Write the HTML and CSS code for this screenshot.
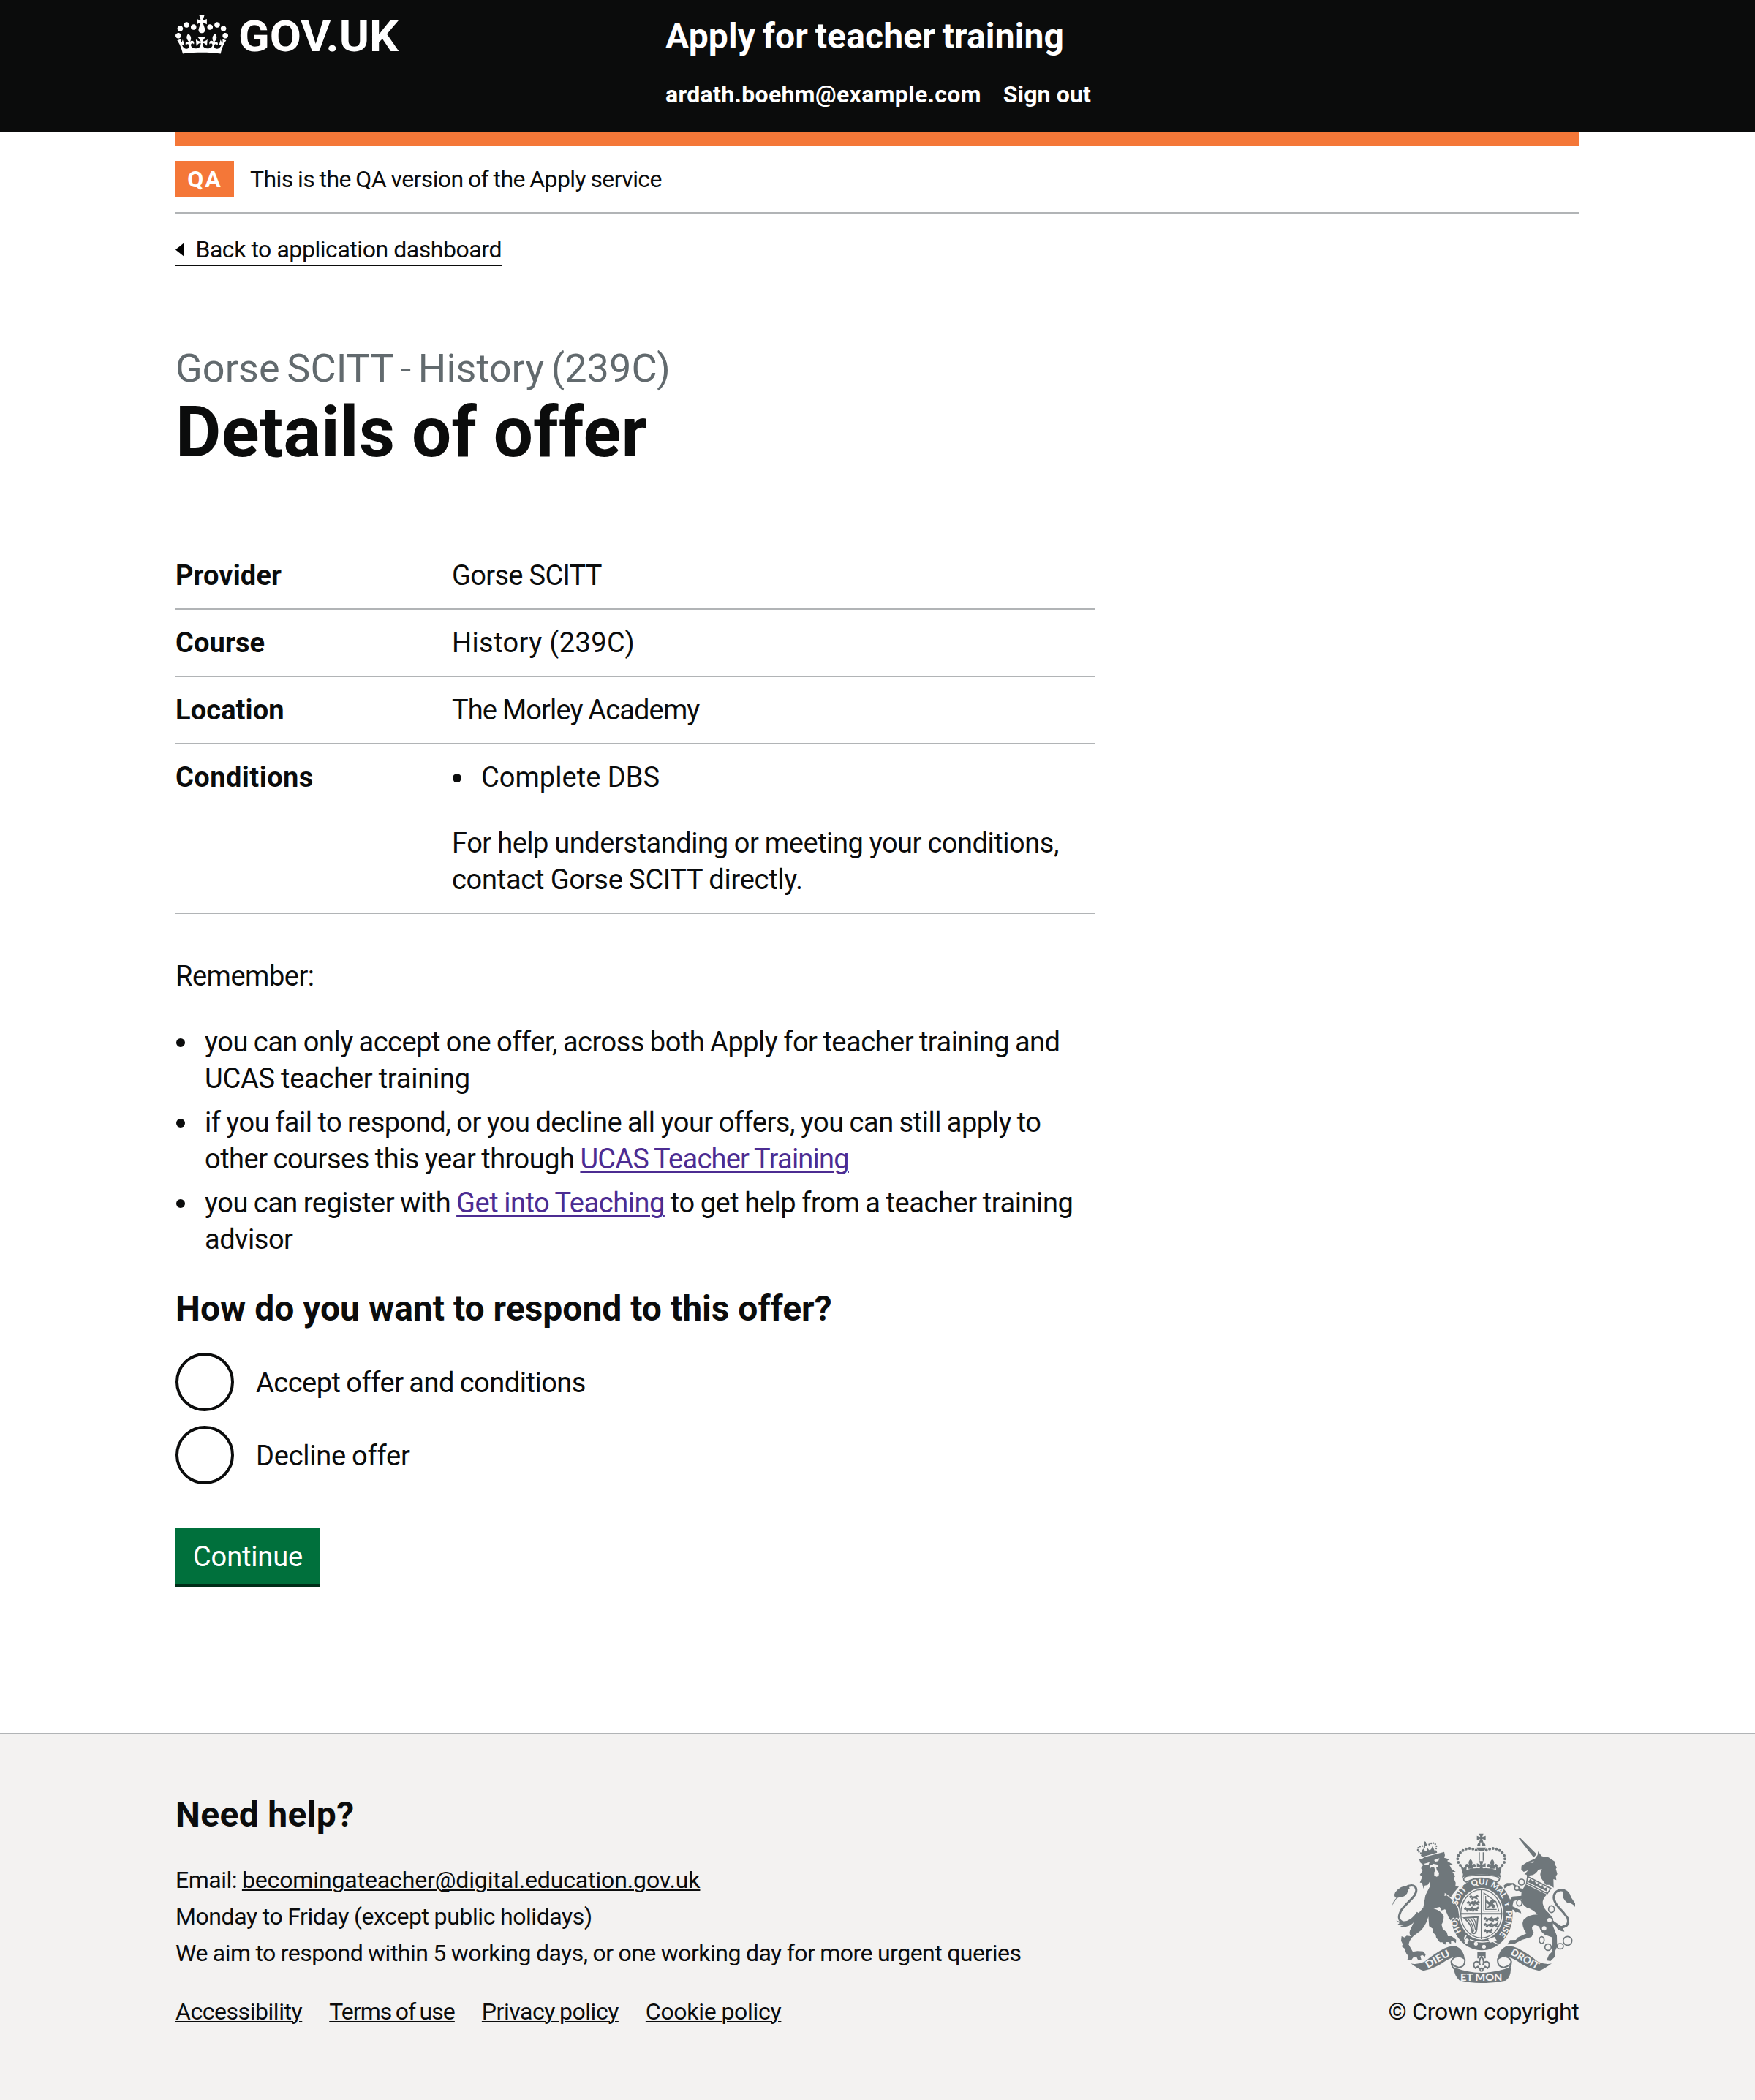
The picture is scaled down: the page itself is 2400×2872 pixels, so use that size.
FILE: index.html
```html
<!DOCTYPE html>
<html lang="en">
<head>
<meta charset="utf-8">
<title>Details of offer - Apply for teacher training - GOV.UK</title>
<link rel="stylesheet" href="styles.css">
</head>
<body>
<header class="header">
  <div class="container header-row">
    <a class="logo" href="#" aria-label="GOV.UK">
      <svg class="crown" viewBox="0 0 132 97" aria-hidden="true"><path fill="currentColor" d="M25 30.2c3.5 1.5 7.7-.2 9.1-3.7 1.5-3.6-.2-7.8-3.9-9.2-3.6-1.4-7.6.3-9.1 3.9-1.4 3.5.3 7.5 3.9 9zM9 39.5c3.6 1.5 7.8-.2 9.2-3.7 1.5-3.6-.2-7.8-3.9-9.1-3.6-1.5-7.6.2-9.1 3.8-1.4 3.5.3 7.5 3.8 9zM4.4 57.2c3.5 1.5 7.7-.2 9.1-3.8 1.5-3.6-.2-7.7-3.9-9.1-3.5-1.5-7.6.3-9.1 3.8-1.4 3.5.3 7.6 3.9 9.1zm38.3-21.4c3.5 1.5 7.7-.2 9.1-3.8 1.5-3.6-.2-7.7-3.9-9.1-3.6-1.5-7.6.3-9.1 3.8-1.3 3.6.4 7.7 3.9 9.1zm64.4-5.6c-3.6 1.5-7.8-.2-9.1-3.7-1.5-3.6.2-7.8 3.8-9.2 3.6-1.4 7.7.3 9.2 3.9 1.3 3.5-.4 7.5-3.9 9zm15.9 9.3c-3.6 1.5-7.7-.2-9.1-3.7-1.5-3.6.2-7.8 3.7-9.1 3.6-1.5 7.7.2 9.2 3.8 1.5 3.5-.3 7.5-3.8 9zm4.7 17.7c-3.6 1.5-7.8-.2-9.2-3.8-1.5-3.6.2-7.7 3.9-9.1 3.6-1.5 7.7.3 9.2 3.8 1.3 3.5-.4 7.6-3.9 9.1zM89.3 35.8c-3.6 1.5-7.8-.2-9.2-3.8-1.4-3.6.2-7.7 3.9-9.1 3.6-1.5 7.7.3 9.2 3.8 1.4 3.6-.3 7.7-3.9 9.1zM69.7 17.7l8.9 4.7V9.3l-8.9 2.8c-.2-.3-.5-.6-.9-.9L72.4 0H59.6l3.5 11.2c-.3.3-.6.5-.9.9l-8.8-2.8v13.1l8.8-4.7c.3.3.6.7.9.9l-5 15.4v.1c-.2.8-.4 1.6-.4 2.4 0 4.1 3.1 7.5 7 8.1h.2c.3 0 .7.1 1 .1.4 0 .7 0 1-.1h.2c4-.6 7.1-4.1 7.1-8.1 0-.8-.1-1.7-.4-2.4V34l-5.1-15.4c.4-.2.7-.6 1-.9zM66 92.8c16.9 0 32.8 1.1 47.1 3.2 4-16.9 8.9-26.7 14-33.5l-9.6-3.4c1 4.9 1.1 7.2 0 10.2-1.5-1.4-3-4.3-4.2-8.7L108.6 76c2.8-2 5-3.2 7.5-3.3-4.4 9.4-10 11.9-13.6 11.2-4.3-.8-6.3-4.6-5.6-7.9 1-4.7 5.7-5.9 8-.5 4.3-8.7-3-11.4-7.6-8.8 7.1-7.2 7.9-13.5 2.1-21.1-8 6.1-8.1 12.3-4.5 20.8-4.7-5.4-12.1-2.5-9.5 6.2 3.4-5.2 7.9-2 7.2 3.1-.6 4.3-6.4 7.8-13.5 7.2-10.3-.9-10.9-8-11.2-13.8 2.5-.5 7.1 1.8 11 7.3L80.2 60c-4.1 4.4-8 5.3-12.3 5.4 1.4-4.4 8-11.6 8-11.6H55.5s6.4 7.2 7.9 11.6c-4.2-.1-8-1-12.3-5.4l1.4 16.4c3.9-5.5 8.5-7.7 10.9-7.3-.3 5.8-.9 12.8-11.1 13.8-7.2.6-12.9-2.9-13.5-7.2-.7-5 3.8-8.3 7.1-3.1 2.7-8.7-4.6-11.6-9.4-6.2 3.7-8.5 3.6-14.7-4.6-20.8-5.8 7.6-5 13.9 2.2 21.1-4.7-2.6-11.9.1-7.7 8.8 2.3-5.5 7.1-4.2 8.1.5.7 3.3-1.3 7.1-5.7 7.9-3.5.7-9-1.8-13.5-11.2 2.5.1 4.7 1.3 7.5 3.3l-4.7-15.4c-1.2 4.4-2.7 7.2-4.3 8.7-1.1-3-.9-5.3 0-10.2l-9.5 3.4c5 6.9 9.9 16.7 14 33.5 14.8-2.1 30.8-3.2 47.7-3.2z"/></svg>
      <svg class="wordmark" viewBox="0 0 230 80" aria-hidden="true"><text x="0" y="59" textLength="219" lengthAdjust="spacingAndGlyphs">GOV.UK</text></svg>
    </a>
    <div class="header-content">
      <a class="service-name" href="#">Apply for teacher training</a>
      <nav class="account"><a class="account-email" href="#">ardath.boehm@example.com</a><a class="sign-out" href="#">Sign out</a></nav>
    </div>
  </div>
</header>

<div class="container">
  <div class="env-bar"></div>
  <div class="phase-banner"><strong class="tag">QA</strong><span class="phase-text">This is the QA version of the Apply service</span></div>
  <a class="back-link" href="#"><svg class="back-arrow" viewBox="0 0 12 19" aria-hidden="true"><path d="M0 9.5L12 0v19z"/></svg><span>Back to application dashboard</span></a>

  <main class="main">
    <span class="caption">Gorse SCITT - History (239C)</span>
    <h1 class="title">Details of offer</h1>

    <dl class="summary">
      <div class="summary-row"><dt class="wide-key">Provider</dt><dd class="caps">Gorse SCITT</dd></div>
      <div class="summary-row"><dt class="wide-key">Course</dt><dd class="course">History (239C)</dd></div>
      <div class="summary-row"><dt class="wide-key">Location</dt><dd class="location">The Morley Academy</dd></div>
      <div class="summary-row"><dt>Conditions</dt><dd>
        <ul class="list conditions"><li><span class="complete">Complete DBS</span></li></ul>
        <p class="guidance">For help understanding or meeting your conditions, <span class="directly">contact Gorse SCITT directly.</span></p>
      </dd></div>
    </dl>

    <p class="remember">Remember:</p>
    <ul class="list reminders">
      <li><span>you can only accept one offer, across both Apply for teacher training and <span class="second-line">UCAS teacher training</span></span></li>
      <li><span>if you fail to respond, or you decline all your offers, you can still apply to<br>other courses this year through <a class="ucas" href="#">UCAS Teacher Training</a></span></li>
      <li><span>you can register with <a class="git" href="#">Get into Teaching</a> <span class="advisor">to get help from a teacher training</span><br>advisor</span></li>
    </ul>

    <form class="response">
      <h2 class="heading">How do you want to respond to this offer?</h2>
      <label class="radio"><input type="radio" name="response"><span>Accept offer and conditions</span></label>
      <label class="radio"><input type="radio" name="response"><span class="decline">Decline offer</span></label>
      <button class="button" type="button">Continue</button>
    </form>
  </main>
</div>

<footer class="footer">
  <div class="container footer-row">
    <div class="footer-help">
      <h2 class="heading">Need help?</h2>
      <p class="contact">Email: <a class="email" href="#">becomingateacher@digital.education.gov.uk</a><br><span class="hours">Monday to Friday (except public holidays)</span><br>We aim to respond within 5 working days, or one working day for more urgent queries</p>
      <ul class="footer-links">
        <li><a href="#">Accessibility</a></li><li class="terms"><a href="#">Terms of use</a></li><li class="privacy"><a href="#">Privacy policy</a></li><li class="cookies"><a href="#">Cookie policy</a></li>
      </ul>
    </div>
    <div class="copyright">
      <svg class="crest" viewBox="27 24 750 612" role="img" aria-label="Royal coat of arms">
        <defs>
          <path id="garter" pathLength="100" d="M392 474A102 121 0 0 1 392 232A102 121 0 0 1 392 474"/>
          <g id="fleur"><path d="M0-22Q13-8 5 4Q17-8 22 4Q22 14 12 13L9 18H-9L-12 13Q-22 14-22 4Q-17-8-5 4Q-13-8 0-22Z"/></g>
          <g id="cross"><path d="M-9-18H9L4-4L18-9V9L4 4L9 18H-9L-4 4L-18 9V-9L-4-4Z"/></g>
          <path id="beast" d="M0 3L8-3L15 3L28 0L35-6L39 3L32 8L38 15L28 13L20 10L16 17L8 14L12 8L4 10Z"/>
          <path id="ribbon" d="M103 556Q130 562 160 548Q200 515 240 494Q265 482 290 485Q322 500 325 542Q312 530 292 527Q270 530 250 542Q205 575 155 586Q140 583 103 556Z"/>
        </defs>
        <!-- lion -->
        <path d="M137 128L150 126L158 120L240 98L243 112L240 122L262 128L252 135L275 150L262 152L270 168L287 180L274 180L285 198L279 206L287 224L286 239L300 241L276 270L263 290L284 315L298 340L304 366L299 378L292 369L285 375L277 370L274 386L266 382L267 370L258 371L254 356L263 349L248 348L243 334L228 338L222 324L196 330Q231 341 238 362Q238 382 229 396L234 414L251 428L255 444L270 444L289 458L288 472L277 465L268 464L268 478L257 468L247 468L244 479L232 469L222 469L207 449L205 438L194 430L195 415L178 403L175 364Q160 416 130 431Q98 450 94 478L111 508L130 505L153 506L164 518L161 528L150 521L142 525L146 540L133 542L127 530L112 532L105 542L89 540L93 526L84 514L77 494L66 486L70 477L63 463L65 444L77 449L86 442L103 444Q92 429 103 413L128 358L154 326L163 276L181 240L183 216L172 234L160 236L155 249L149 225L140 224L150 200L140 192L151 176L145 165L154 151L143 143Z"/>
        <path class="cut" d="M157 147L180 140L176 150L165 153ZM198 132L220 124L216 136L205 138ZM180 155L196 147L214 151L215 160L207 161L210 174L219 184L217 197L208 200L199 194V182L203 174L198 160L188 159L182 167Z"/>
        <path d="M143 110L208 89L211 101L149 119Z"/><path class="cut-line" d="M148 110L210 92"/>
        <path class="dots small" d="M144 103L132 94L131 84L139 76L150 74L159 78M207 84L208 74L202 64L192 61L181 65L173 73"/>
        <path d="M157 54L165 57L165 64L172 66L168 75L159 73ZM150 90L157 83L161 96L170 93L170 80L178 91L186 88L191 76L198 87L201 99L150 115Z"/>
        <path class="tail" d="M132 347Q103 392 68 386Q43 374 65 335Q82 315 104 293Q135 263 121 241Q106 229 80 244"/>
        <path d="M27 317Q31 297 44 287Q31 282 39 264Q59 236 94 236L98 248Q91 252 88 268Q77 286 56 284Q42 287 37 302ZM43 380L59 384L89 388Q107 378 129 351L133 359Q126 383 96 401L71 409L59 402L74 400L49 396L57 390Z"/>
        <!-- garter and shield -->
        <ellipse cx="394" cy="354" rx="131" ry="152" class="halo"/>
        <ellipse cx="394" cy="354" rx="127" ry="148"/>
        <ellipse cx="392" cy="352" rx="91" ry="106" class="cut"/>
        <ellipse cx="392" cy="352" rx="84" ry="99" class="line"/>
        <path class="line thick" d="M393 250V456M306 352H478"/>
        <use href="#beast" transform="translate(342 278)"/><use href="#beast" transform="translate(332 302)"/><use href="#beast" transform="translate(320 327)"/>
        <use href="#beast" transform="translate(347 302)"/><use href="#beast" transform="translate(344 327)"/>
        <use href="#beast" transform="translate(401 368)"/><use href="#beast" transform="translate(401 392)"/><use href="#beast" transform="translate(401 417)"/>
        <use href="#beast" transform="translate(426 368)"/><use href="#beast" transform="translate(424 392)"/>
        <path class="line" d="M403 267L452 302L464 341H403ZM410 279V334H455"/>
        <path d="M412 292L424 304L438 291L449 301L440 311L451 319L442 332L433 321L414 331L423 315L411 305Z"/>
        <path class="line thick" d="M322 369L378 365L373 417Q370 437 355 431Q356 399 322 369Z"/><path class="line" d="M336 373Q357 389 361 425M347 371Q363 385 368 417M358 369Q370 380 371 406"/>
        <path class="cut" d="M334 438Q319 442 322 458L333 453L342 459Q332 466 337 477L326 474L322 464M420 456L446 447L456 463L430 470Z"/>
        <path class="cut-line" d="M345 458Q390 476 432 462L462 478"/>
        <circle cx="370" cy="475" r="8" class="cut"/><circle cx="403" cy="487" r="8" class="cut"/>
        <!-- lion's forearm over the garter -->
        <path class="outlined" d="M244 270Q280 292 298 328L304 366L299 378L292 369L285 375L277 370L266 382L258 371L248 348L240 320Z"/>
        <path d="M225 280L250 278L270 305L258 345L243 334L222 324Z"/>
        <g class="motto">
          <text><textPath href="#garter" startOffset="18%">HO</textPath></text>
          <text><textPath href="#garter" startOffset="35.5%">SOIT</textPath></text>
          <text><textPath href="#garter" startOffset="49%">QUI</textPath></text>
          <text><textPath href="#garter" startOffset="60.5%">MAL</textPath></text>
          <text><textPath href="#garter" startOffset="69.5%">Y</textPath></text>
          <text><textPath href="#garter" startOffset="80.5%">PENSE</textPath></text>
        </g>
        <!-- crown -->
        <use href="#cross" transform="translate(392 41)"/>
        <path d="M375 75Q376 60 388 58V75ZM396 58Q409 60 410 75H396ZM373 80H411Q407 96 392 96Q377 96 373 80Z"/>
        <path class="dots" d="M371 91L358 86L344 84L330 86L317 92L306 101L298 113L295 127L298 141L306 153M413 91L426 86L440 84L454 86L467 92L478 101L486 113L489 127L486 141L478 153"/>
        <path class="line" d="M384 100V134M400 100V134"/>
        <use href="#fleur" transform="translate(348 149)"/><use href="#fleur" transform="translate(437 149)"/><use href="#cross" transform="translate(392 154)"/>
        <path d="M306 151L320 164L334 151L331 172Q360 162 392 166Q424 162 453 172L450 151L464 164L478 151L469 190L473 205Q456 191 392 191Q328 191 315 205L317 190Z"/>
        <path class="outlined-light" d="M320 208Q325 197 345 196Q392 191 440 196Q463 198 467 208Q465 219 455 222Q392 190 331 222Q319 219 320 208Z"/>
        <!-- unicorn -->
        <g transform="translate(375 0)">
          <path d="M168 39L176 40L244 107L232 121ZM182 155L207 139L237 126L248 111L250 96L264 115L276 119Q293 116 301 126L319 138L318 148L327 162L323 168L329 189L323 198L325 214L313 210L314 245L297 233L282 233L264 208Q253 190 266 169Q252 169 246 179Q234 194 218 194L205 200L203 192L194 190L210 173L191 180L181 170Z"/>
          <path class="cut" d="M217 142L232 135L231 143Z"/>
          <path class="outlined-light" d="M207 199L302 248L288 269L203 226Z"/>
          <path d="M211 218L219 207L227 220L236 215L242 230L252 225L258 239L269 234L274 248L285 244L286 260L210 223Z"/>
          <path d="M200 231L286 273Q267 292 269 309Q274 334 293 348L312 371L311 402L327 442L328 487L319 508L320 527L301 546L285 543L294 521L308 507L309 449L289 442Q263 435 254 404Q231 392 225 407Q226 423 233 429L223 447L184 459L151 476L124 478L135 460L159 459L166 449L202 433Q179 399 190 377Q207 356 248 355Q230 334 203 326Q181 312 185 293L166 294L149 301L145 321L177 337L181 350L167 345L156 346L151 336L134 333L130 301L145 281L181 278L182 263L161 253L146 232L124 240L112 248L109 236L122 226H149L172 246L188 250Z"/>
          <circle class="ring" cx="182" cy="222" r="12"/><circle class="ring light" cx="163" cy="247" r="9"/><ellipse class="ring light" cx="173" cy="307" rx="11" ry="13"/><ellipse class="ring light" cx="305" cy="333" rx="12" ry="14"/>
          <circle class="cut" cx="297" cy="378" r="9"/><circle class="cut" cx="275" cy="412" r="9"/>
          <ellipse class="ring" cx="265" cy="460" rx="10" ry="14"/><circle class="ring" cx="291" cy="489" r="13"/><ellipse class="ring" cx="341" cy="485" rx="13" ry="11"/><circle class="ring" cx="371" cy="463" r="18"/>
          <path class="tail" d="M309 382Q329 409 352 407Q381 397 371 369Q354 345 332 323Q304 288 321 265Q334 250 357 257"/>
          <path d="M344 250Q375 249 386 285L402 309V324Q391 307 369 306Q348 290 351 260ZM318 385L345 403L379 389Q375 407 352 410L358 425Q332 423 324 405Z"/>
        </g>
        <!-- motto scroll -->
        <path class="line thick" d="M324 535Q329 569 299 572Q269 565 269 547Q277 529 293 528M269 547Q268 575 293 586M460 535Q455 569 485 572Q515 565 515 547Q507 529 491 528M515 547Q516 575 491 586"/>
        <use href="#ribbon"/><use href="#ribbon" transform="translate(784 0) scale(-1 1)"/>
        <path d="M278 571Q335 594 392 594Q450 594 513 571Q515 611 492 626Q440 637 392 636Q340 636 302 625Q282 608 278 571Z"/>
        <g class="motto large">
          <text transform="translate(213 538) rotate(-30)" y="13" textLength="108" lengthAdjust="spacingAndGlyphs">DIEU</text>
          <text x="392" y="628" textLength="172" lengthAdjust="spacingAndGlyphs">ET MON</text>
          <text transform="translate(571 538) rotate(30)" y="13" textLength="126" lengthAdjust="spacingAndGlyphs">DROIT</text>
        </g>
        <path d="M376 510H410V535H402V526H384V535H376Z"/>
        <path class="line thick" d="M393 527Q406 542 399 562Q407 541 422 552Q430 565 418 575L408 568L402 577H384L378 568L368 575Q356 565 364 552Q379 541 387 562Q380 542 393 527Z"/><circle class="ring" cx="393" cy="581" r="6"/>
      </svg>
      <span>© Crown copyright</span>
    </div>
  </div>
</footer>
</body>
</html>
```
FILE: styles.css
```css
* { box-sizing: border-box; }
body { margin: 0; background: #fff; color: #0b0c0c; font: 38px/50px Roboto, "Liberation Sans", sans-serif; letter-spacing: -0.013em; }
h1, h2, p, ul, dl, dd { margin: 0; padding: 0; }
ul { list-style: none; }
.container { width: 1920px; margin: 0 auto; }

.header { height: 180px; background: #0b0c0c; color: #fff; font-weight: 700; letter-spacing: 0; }
.header a { color: inherit; text-decoration: none; }
.header-row { display: flex; }
.logo { display: flex; width: 670px; padding-top: 11px; align-items: flex-start; gap: 14px; }
.crown { width: 72px; height: 53px; margin-top: 10px; }
.wordmark { width: 230px; height: 80px; fill: #fff; font-size: 59px; }
.header-content { padding-top: 20px; }
.service-name { display: block; font-size: 48px; line-height: 60px; letter-spacing: 0.003em; word-spacing: -0.05em; }
.account { display: flex; gap: 30px; margin-top: 29px; font-size: 32px; line-height: 40px; }
.account-email { letter-spacing: 0.011em; }
.sign-out { letter-spacing: 0.004em; }

.env-bar { height: 20px; background: #f47738; }
.phase-banner { display: flex; padding: 20px 0; border-bottom: 2px solid #b1b4b6; font-size: 32px; letter-spacing: -0.019em; word-spacing: -0.027em; }
.tag { width: 80px; height: 50px; margin-right: 22px; background: #f47738; color: #fff; text-align: center; letter-spacing: 2px; }
.back-link { display: inline-flex; width: 446px; height: 43px; margin-top: 29px; border-bottom: 2px solid #0b0c0c; color: #0b0c0c; font-size: 32px; line-height: 40px; letter-spacing: -0.014em; text-decoration: none; white-space: nowrap; vertical-align: top; }
.back-arrow { width: 12px; height: 19px; margin: 11px 16px 0 0; }

.main { width: 1258px; padding-top: 110px; }
.caption { display: block; color: #626a6e; font-size: 54px; line-height: 60px; letter-spacing: 0.001em; word-spacing: -0.07em; }
.title { margin: 7px 0 101px; font-size: 96px; line-height: 100px; letter-spacing: 0.003em; word-spacing: -0.015em; }

.summary-row { display: flex; padding: 20px 0; border-bottom: 2px solid #b1b4b6; }
.summary dt { flex: 0 0 378px; font-weight: 700; letter-spacing: 0.012em; }
.summary .wide-key { letter-spacing: 0.003em; }
.caps { letter-spacing: -0.018em; }
.course { letter-spacing: 0.010em; }
.location { letter-spacing: -0.023em; word-spacing: -0.02em; }
.complete { letter-spacing: 0.001em; }
.guidance { letter-spacing: -0.012em; word-spacing: -0.016em; }
.directly { letter-spacing: -0.007em; }
.list li { display: flex; }
.list li::before { content: ""; flex: 0 0 12px; height: 12px; margin: 20px 27px 0 1px; border-radius: 50%; background: #0b0c0c; }
.conditions { margin-bottom: 40px; }
.remember { margin-top: 60px; }
.reminders { display: flex; flex-direction: column; gap: 10px; margin: 40px 0; word-spacing: -0.027em; }
.second-line { letter-spacing: -0.006em; }
.reminders a { color: #4c2c92; text-decoration-thickness: 2px; text-underline-offset: 4px; }
.ucas { letter-spacing: -0.020em; }
.git { letter-spacing: -0.012em; }
.advisor { letter-spacing: -0.011em; }

.heading { font-size: 48px; line-height: 60px; letter-spacing: 0; }
.response .heading { margin-bottom: 30px; }
.radio { display: flex; height: 80px; margin-bottom: 20px; word-spacing: -0.03em; }
.radio input { appearance: none; width: 80px; height: 80px; margin: 0; border: 4px solid #0b0c0c; border-radius: 50%; background: #fff; }
.radio span { padding: 16px 0 0 30px; }
.radio .decline { letter-spacing: -0.006em; }
.button { display: block; width: 198px; height: 76px; margin-top: 60px; padding: 14px 0 12px; border: 0; background: #00703c; box-shadow: 0 4px 0 #002d18; color: #fff; font: inherit; letter-spacing: -0.004em; }

.footer { height: 502px; margin-top: 204px; border-top: 2px solid #b1b4b6; background: #f3f2f1; font-size: 32px; }
.footer-row { display: flex; justify-content: space-between; align-items: flex-end; padding-top: 80px; }
.footer .heading { margin-bottom: 34px; letter-spacing: 0.007em; }
.footer a { color: #0b0c0c; text-decoration-thickness: 2px; text-underline-offset: 2px; }
.contact { word-spacing: -0.018em; }
.email { letter-spacing: -0.004em; }
.hours { letter-spacing: -0.013em; }
.footer-links { display: flex; gap: 37px; margin-top: 30px; letter-spacing: -0.014em; white-space: nowrap; }
.terms { letter-spacing: -0.030em; word-spacing: -0.05em; }
.privacy { letter-spacing: -0.015em; word-spacing: -0.04em; }
.cookies { letter-spacing: -0.009em; word-spacing: -0.02em; }
.copyright { display: flex; flex-direction: column; align-items: center; width: 262px; letter-spacing: -0.007em; white-space: nowrap; }
.crest { width: 250px; height: 204px; margin-bottom: 14px; overflow: visible; fill: #6f777b; }
.crest .cut { fill: #f3f2f1; }
.crest .halo { fill: #f3f2f1; }
.crest .cut-line { fill: none; stroke: #f3f2f1; stroke-width: 4; }
.crest .line { fill: none; stroke: #6f777b; stroke-width: 4; }
.crest .thick { stroke-width: 6; }
.crest .ring { fill: none; stroke: #6f777b; stroke-width: 5; }
.crest .light { fill: #f3f2f1; }
.crest .tail { fill: none; stroke: #6f777b; stroke-width: 9; }
.crest .outlined { stroke: #f3f2f1; stroke-width: 4; }
.crest .outlined-light { fill: #f3f2f1; stroke: #6f777b; stroke-width: 5; }
.crest .dots { fill: none; stroke: #6f777b; stroke-width: 12; stroke-linecap: round; stroke-dasharray: 0 14.2; }
.crest .small { stroke-width: 7; stroke-dasharray: 0 9.5; }
.motto { fill: #f3f2f1; font: 900 34px Lato, "Liberation Sans", sans-serif; letter-spacing: 0; text-anchor: middle; }
.large { font-size: 40px; }
```
